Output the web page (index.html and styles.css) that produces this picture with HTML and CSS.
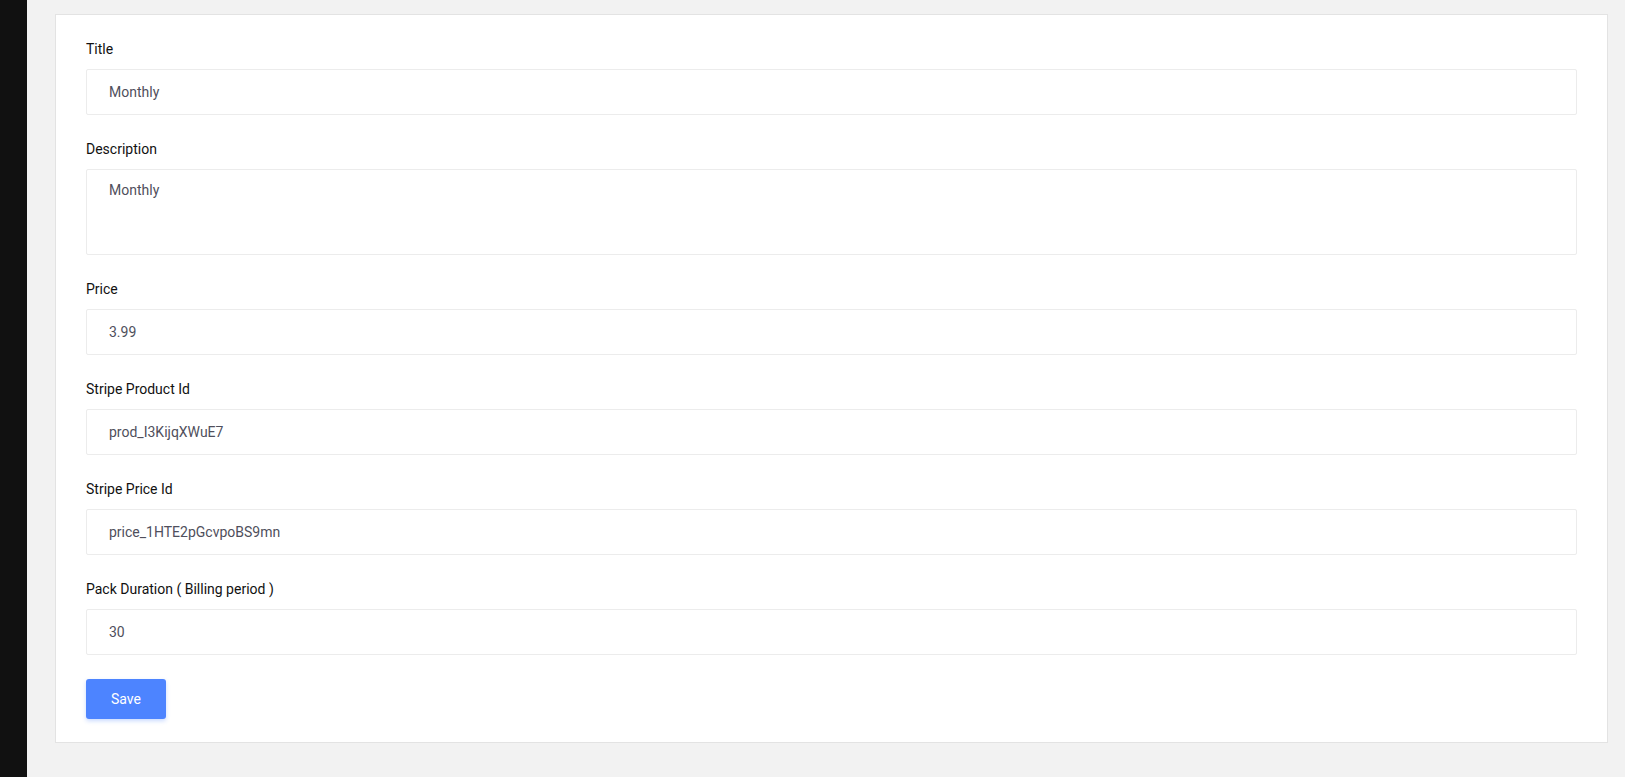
FILE: index.html
```html
<!DOCTYPE html>
<html>
<head>
<meta charset="utf-8">
<title>Edit Plan</title>
<link rel="stylesheet" href="styles.css">
</head>
<body>
<div class="layout">
  <aside class="sidebar"></aside>
  <main class="main">
    <form class="card">
      <div class="form-group">
        <label class="label">Title</label>
        <input class="input" type="text" value="Monthly">
      </div>
      <div class="form-group">
        <label class="label">Description</label>
        <textarea class="input textarea">Monthly</textarea>
      </div>
      <div class="form-group">
        <label class="label">Price</label>
        <input class="input" type="text" value="3.99">
      </div>
      <div class="form-group">
        <label class="label">Stripe Product Id</label>
        <input class="input" type="text" value="prod_I3KijqXWuE7">
      </div>
      <div class="form-group">
        <label class="label">Stripe Price Id</label>
        <input class="input" type="text" value="price_1HTE2pGcvpoBS9mn">
      </div>
      <div class="form-group">
        <label class="label">Pack Duration ( Billing period )</label>
        <input class="input" type="text" value="30">
      </div>
      <button class="btn" type="button">Save</button>
    </form>
  </main>
</div>
</body>
</html>
```
FILE: styles.css
```css
* { box-sizing: border-box; }
html, body {
  margin: 0;
  height: 100%;
}
body {
  background: #f2f2f2;
  font-family: Roboto, "Liberation Sans", sans-serif;
  font-size: 14px;
  color: #111;
}
.layout {
  display: flex;
  min-height: 777px;
}
.sidebar {
  width: 27px;
  flex: 0 0 27px;
  background: #111111;
}
.main {
  flex: 1;
  padding: 14px 17px 34px 28px;
}
.card {
  background: #fff;
  border: 1px solid #e3e3e3;
  padding: 24px 30px 23px 30px;
  display: flex;
  flex-direction: column;
  align-items: flex-start;
}
.form-group {
  width: 100%;
  margin-bottom: 24px;
}
.label {
  display: block;
  line-height: 21px;
  margin-bottom: 9px;
  color: #111;
}
.input {
  display: block;
  width: 100%;
  height: 46px;
  border: 1px solid #ececec;
  border-radius: 2px;
  padding: 0 22px;
  font-family: Roboto, "Liberation Sans", sans-serif;
  font-size: 14px;
  color: #4f4f5c;
  background: #fff;
  outline: none;
}
.textarea {
  height: 86px;
  padding: 10px 22px;
  line-height: 21px;
  resize: none;
}
.btn {
  width: 80px;
  height: 40px;
  border: none;
  border-radius: 3px;
  background: #4d84ff;
  color: #fff;
  font-family: Roboto, "Liberation Sans", sans-serif;
  font-size: 14px;
  font-weight: 400;
  box-shadow: 0 2px 4px rgba(77, 132, 255, 0.3);
  cursor: pointer;
}
```
